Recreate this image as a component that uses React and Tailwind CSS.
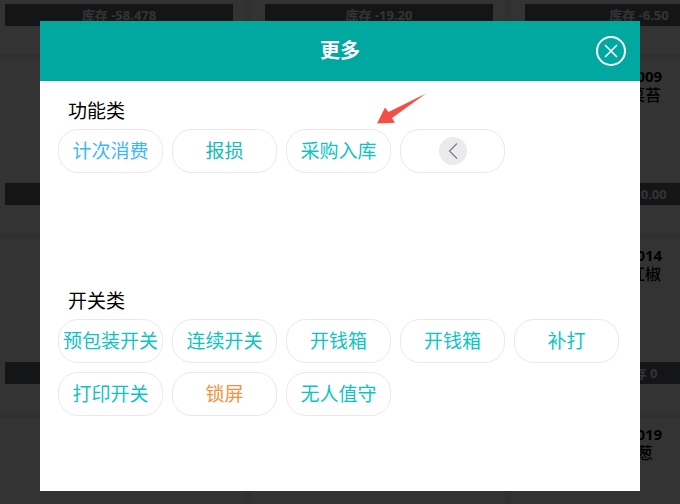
const cards = [
  { stock: "库存 -58.478" },
  { stock: "库存 -19.20" },
  { stock: "库存 -6.50" },
  { stock: "" },
  { stock: "" },
  { code: "0009", name: "菜苔", stock: "库存 0.00" },
  { stock: "" },
  { stock: "" },
  { code: "0014", name: "红椒", stock: "库存 0" },
  {},
  {},
  { code: "0019", name: "葱" },
];

const funcs = [
  { label: "计次消费", color: "text-[#3cb8fa]" },
  { label: "报损", color: "text-[#12bcb4]" },
  { label: "采购入库", color: "text-[#0cc4c4]" },
];

const switches = [
  { label: "预包装开关", color: "text-[#0cc4c4]" },
  { label: "连续开关", color: "text-[#0cc4c4]" },
  { label: "开钱箱", color: "text-[#0cc4c4]" },
  { label: "开钱箱", color: "text-[#0cc4c4]" },
  { label: "补打", color: "text-[#0cc4c4]" },
  { label: "打印开关", color: "text-[#0cc4c4]" },
  { label: "锁屏", color: "text-[#f5923e]" },
  { label: "无人值守", color: "text-[#0cc4c4]" },
];

function Pill({ children, color }) {
  return (
    <button
      type="button"
      className={`w-[105px] h-[44px] flex items-center justify-center whitespace-nowrap bg-white border border-[#e8e8f2] rounded-[20px] text-[19px] ${color}`}
    >
      {children}
    </button>
  );
}

function Card({ code, name, stock }) {
  return (
    <div className="h-[173px] bg-white flex flex-col pl-[13px]">
      <div className="h-[123px] pt-[6px] text-center text-black">
        <div className="text-[15px] font-bold h-[20px] leading-[20px]">{code}</div>
        <div className="text-[16px] font-medium h-[18px] leading-[18px]">{name}</div>
      </div>
      <div className="h-[22px] mr-[12px] bg-[#646973] text-white text-center text-[13px] font-bold leading-[22px]">
        {stock}
      </div>
    </div>
  );
}

export default function App() {
  return (
    <div className="relative w-[680px] h-[504px] overflow-hidden bg-[#eef0f6] font-['Noto_Sans','Noto_Sans_CJK_SC',sans-serif]">
      <div className="grid grid-cols-[253px_253px_253px] gap-x-[7px] gap-y-[6px] w-[773px] -ml-[8px] -mt-[119px]">
        {cards.map((c, i) => (
          <Card key={i} {...c} />
        ))}
      </div>

      <div className="absolute inset-0 bg-black/80 flex justify-center pt-[21px]">
        <div className="relative w-[600px] h-[470px] bg-white">
          <div className="relative h-[60px] bg-[#00a8a0] flex items-center justify-center text-white text-[20px] font-bold">
            更多
            <button type="button" className="absolute right-[14px] top-[15px] w-[30px] h-[30px]">
              <svg viewBox="0 0 30 30" width="30" height="30" fill="none" stroke="#fff">
                <circle cx="15" cy="15" r="14" strokeWidth="2" />
                <path d="M9 9l12 12M21 9L9 21" strokeWidth="1.6" />
              </svg>
            </button>
          </div>

          <div className="pt-[16px] h-[206px]">
            <div className="pl-[28px] h-[28px] leading-[28px] text-[19px] text-black mb-[4px]">功能类</div>
            <div className="px-[18px] flex flex-wrap gap-[9px]">
              {funcs.map((f) => (
                <Pill key={f.label} color={f.color}>{f.label}</Pill>
              ))}
              <Pill>
                <span className="w-[28px] h-[28px] rounded-full bg-[#ebebed] flex items-center justify-center">
                  <svg viewBox="0 0 10 16" width="10" height="16" fill="none" stroke="#808085" strokeWidth="1.3">
                    <path d="M9 .5L1.500 8 9 15.500" />
                  </svg>
                </span>
              </Pill>
            </div>
          </div>

          <div>
            <div className="pl-[28px] h-[28px] leading-[28px] text-[19px] text-black mb-[4px]">开关类</div>
            <div className="px-[18px] flex flex-wrap gap-[9px]">
              {switches.map((s, i) => (
                <Pill key={i} color={s.color}>{s.label}</Pill>
              ))}
            </div>
          </div>

          <svg className="absolute left-[330px] top-[65px]" width="64" height="44" viewBox="0 0 64 44">
            <path d="M7 37.500L15 21.500l3.500 4.500L56 7.500 22 32l3 4.700z" fill="#f44f45" />
          </svg>
        </div>
      </div>
    </div>
  );
}
